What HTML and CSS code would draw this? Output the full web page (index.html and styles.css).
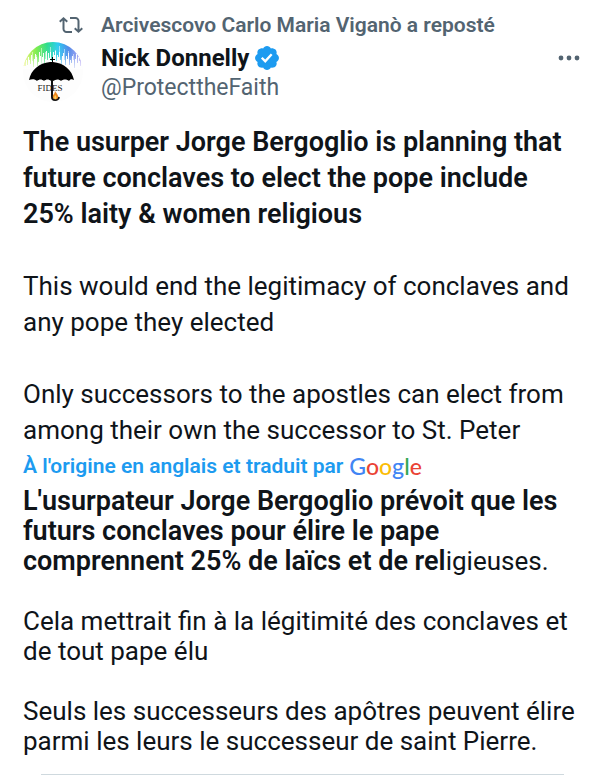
FILE: index.html
```html
<!DOCTYPE html>
<html lang="fr">
<head>
<meta charset="UTF-8">
<meta name="viewport" content="width=device-width, initial-scale=1.0">
<title>Nick Donnelly</title>
<link rel="stylesheet" href="styles.css">
</head>
<body>

<article class="post">
  <div class="repost">
    <svg class="repost-icon" viewBox="0 0 24 24" aria-hidden="true">
      <path d="M4.5 3.88l4.432 4.14-1.364 1.46L5.5 7.55V16c0 1.1.896 2 2 2H13v2H7.5c-2.209 0-4-1.79-4-4V7.55L1.432 9.48.068 8.02 4.5 3.88zM16.5 6H11V4h5.5c2.209 0 4 1.79 4 4v8.45l2.068-1.93 1.364 1.46-4.432 4.14-4.432-4.14 1.364-1.46 2.068 1.93V8c0-1.1-.896-2-2-2z"/>
    </svg>
    <a class="repost-by" href="#">Arcivescovo Carlo Maria Viganò a reposté</a>
  </div>

  <header class="author">
    <svg class="avatar" viewBox="0 0 60 60" role="img" aria-label="Nick Donnelly">
      <defs>
        <clipPath id="circle"><circle cx="30" cy="30" r="30"/></clipPath>
        <linearGradient id="rainbow" x1="0" x2="1" y1="0" y2="0">
          <stop offset="0" stop-color="#f0f36a"/>
          <stop offset=".22" stop-color="#79ec45"/>
          <stop offset=".4" stop-color="#2bdc8b"/>
          <stop offset=".58" stop-color="#2bcbf0"/>
          <stop offset=".76" stop-color="#4a86e8"/>
          <stop offset="1" stop-color="#c0a6f5"/>
        </linearGradient>
        <linearGradient id="fade" x1="0" x2="0" y1="0" y2="1">
          <stop offset="0" stop-color="#fff" stop-opacity="0"/>
          <stop offset=".5" stop-color="#fff" stop-opacity=".1"/>
          <stop offset="1" stop-color="#fff" stop-opacity=".8"/>
        </linearGradient>
      </defs>
      <g clip-path="url(#circle)">
        <path fill="#fdfdfd" d="M0 0h60v60H0z"/>
        <path fill="url(#rainbow)" d="M0 0h60v20h-1v-3h-1v7h-1v-5h-1v-4h-1v6h-1v-9h-1v5h-1v9h-1v-8h-1v-4h-1v7h-1v-3h-1v5h-1v-12h-1v6h-1v-3h-1v9h-1v-5h-1v-7h-1v3h-1v8h-1v-4h-1v-8h-1v5h-1v-2h-1v6h-1v-10h-1v4h-1v-3h-1v5h-1v4h-1v-9h-1v6h-1v-5h-1v7h-1v-9h-1v8h-1v5h-1v-11h-1v4h-1v7h-1v-8h-1v-4h-1v10h-1v4h-1v-9h-1v-3h-1v5h-1v8h-1v-6h-1v-6h-1v9h-1v-4h-1v-3h-1v8h-1v-5h-1v6H0z"/>
        <path fill="url(#fade)" d="M0 0h60v27H0z"/>
        <path stroke="#fff" stroke-opacity=".5" d="M9.500 10v18M13.500 13v12M18.500 6v16M22.500 10v12M27.500 5v12M32.500 8v14M36.500 4v14M41.500 7v14M45.500 9v18M50.500 12v15"/>
      </g>
      <text class="avatar-text" x="27" y="49" text-anchor="middle">FIDES</text>
      <path d="M29 20v-2h-2v-1h2v-2h1v2h2v1h-2v2c11 1 19 8 21 18-2-1-4-1-5 1-2-2-6-2-8 0-2-2-5-2-8 0l-1-1-1 1c-2-2-5-2-7 0-2-2-5-2-7 0-2-2-5-2-8-1 2-10 10-17 21-18z"/>
      <path fill="none" stroke="#111" stroke-width="2" d="M29 38v17c0 4 6 4 7 0"/>
      <path fill="#ef891f" d="M32 49c1 2 4 4 3 7-1 2-5 2-5-1-1-2 2-3 2-6z"/>
      <path fill="#ffd15b" d="M32 53c2 2 2 4 0 4-1 0-1-2 0-4z"/>
    </svg>
    <div class="names">
      <div class="name-row">
        <a class="name" href="#">Nick Donnelly</a>
        <svg class="badge" viewBox="0 0 22 22" role="img" aria-label="Compte certifié">
          <path d="M20.396 11c-.018-.646-.215-1.275-.57-1.816-.354-.54-.852-.972-1.438-1.246.223-.607.27-1.264.14-1.897-.131-.634-.437-1.218-.882-1.687-.47-.445-1.053-.75-1.687-.882-.633-.13-1.29-.083-1.897.14-.273-.587-.704-1.086-1.245-1.44S11.647 1.620 11 1.604c-.646.017-1.273.213-1.813.568s-.969.854-1.240 1.440c-.608-.223-1.267-.272-1.902-.14-.635.130-1.220.436-1.690.882-.445.470-.749 1.055-.878 1.688-.130.633-.080 1.290.144 1.896-.587.274-1.087.705-1.443 1.245-.356.540-.555 1.170-.574 1.817.020.647.218 1.276.574 1.817.356.540.856.972 1.443 1.245-.224.606-.274 1.263-.144 1.896.130.634.433 1.218.877 1.688.470.443 1.054.747 1.687.878.633.132 1.290.084 1.897-.136.274.586.705 1.084 1.246 1.439.540.354 1.170.551 1.816.569.647-.016 1.276-.213 1.817-.567s.972-.854 1.245-1.440c.604.239 1.266.296 1.903.164.636-.132 1.220-.447 1.680-.907.460-.460.776-1.044.908-1.681s.075-1.299-.165-1.903c.586-.274 1.084-.705 1.439-1.246.354-.540.551-1.170.569-1.816zM9.662 14.850l-3.429-3.428 1.293-1.302 2.072 2.072 4.400-4.794 1.347 1.246z"/>
        </svg>
      </div>
      <a class="handle" href="#">@ProtecttheFaith</a>
    </div>
    <button class="more" type="button" aria-label="Plus">
      <svg viewBox="0 0 24 8" aria-hidden="true">
        <circle cx="4" cy="4" r="2.400"/>
        <circle cx="12" cy="4" r="2.400"/>
        <circle cx="20" cy="4" r="2.400"/>
      </svg>
    </button>
  </header>

  <div class="original" lang="en">
    <p><strong>The usurper Jorge Bergoglio is planning that<br>future conclaves to elect the pope include<br>25% laity &amp; women religious</strong></p>
    <p>This would end the legitimacy of conclaves and<br>any pope they elected</p>
    <p>Only successors to the apostles can elect from<br>among their own the successor to St. Peter</p>
  </div>

  <div class="source">
    <a class="source-link" href="#">À l'origine en anglais et traduit par</a>
    <a class="google" href="#"><span class="blue">G</span><span class="red">o</span><span class="yellow">o</span><span class="blue">g</span><span class="green">l</span><span class="red">e</span></a>
  </div>

  <div class="translation">
    <p><strong>L'usurpateur Jorge Bergoglio prévoit que les<br>futurs conclaves pour élire le pape<br>comprennent 25% de laïcs et de rel</strong>igieuses.</p>
    <p>Cela mettrait fin à la légitimité des conclaves et<br>de tout pape élu</p>
    <p>Seuls les successeurs des apôtres peuvent élire<br>parmi les leurs le successeur de saint Pierre.</p>
  </div>
  <hr class="rule">
</article>

</body>
</html>
```
FILE: styles.css
```css
body {
  margin: 0;
  background-color: #fff;
  color: #0f1419;
  font-family: Roboto, "Noto Sans", sans-serif;
  font-size: 26px;
}

a {
  color: inherit;
  text-decoration: none;
}

p {
  margin: 0;
}

strong {
  font-size: 27px;
  font-weight: 600;
}

.post {
  padding: 10px 0 0 23px;
}

.repost {
  display: flex;
  align-items: center;
  gap: 18px;
  padding-left: 36px;
  line-height: 30px;
  font-size: 21px;
  font-weight: 600;
  color: #536471;
}

.repost-icon {
  width: 24px;
  height: 24px;
  fill: #536471;
}

.author {
  display: flex;
  align-items: flex-start;
  gap: 18px;
  padding-top: 2px;
  padding-right: 11px;
}

.avatar {
  width: 60px;
  height: 60px;
}

.avatar-text {
  font-family: "Liberation Serif", serif;
  font-size: 9px;
  fill: #222;
}

.names {
  flex: 1;
  padding-top: 1px;
  line-height: 30px;
  font-size: 24px;
}

.name-row {
  display: flex;
  align-items: center;
  gap: 4px;
}

.name {
  font-weight: 700;
}

.badge {
  width: 28px;
  height: 28px;
  fill: #1d9bf0;
}

.handle {
  display: block;
  font-size: 23px;
  color: #536471;
}

.more {
  display: flex;
  align-items: center;
  height: 32px;
  padding: 0;
  border: none;
  background: none;
  cursor: pointer;
}

.more svg {
  width: 24px;
  height: 8px;
  fill: #536471;
}

.original {
  padding-top: 21px;
  line-height: 36px;
}

.original p + p {
  margin-top: 36px;
}

.source {
  display: flex;
  align-items: center;
  gap: 6px;
  line-height: 36px;
}

.source-link {
  font-size: 21px;
  font-weight: 600;
  color: #1d9bf0;
}

.google {
  font-family: Lato, sans-serif;
  font-size: 23px;
  font-weight: 500;
}

.blue {
  color: #4285f4;
}

.red {
  color: #ea4335;
}

.yellow {
  color: #fbbc05;
}

.green {
  color: #34a853;
}

.translation {
  padding-top: 2px;
  line-height: 30px;
}

.translation p + p {
  margin-top: 30px;
}

.rule {
  height: 1px;
  margin: 18px 28px 0 18px;
  border: none;
  background-color: #cfd9de;
}
```
